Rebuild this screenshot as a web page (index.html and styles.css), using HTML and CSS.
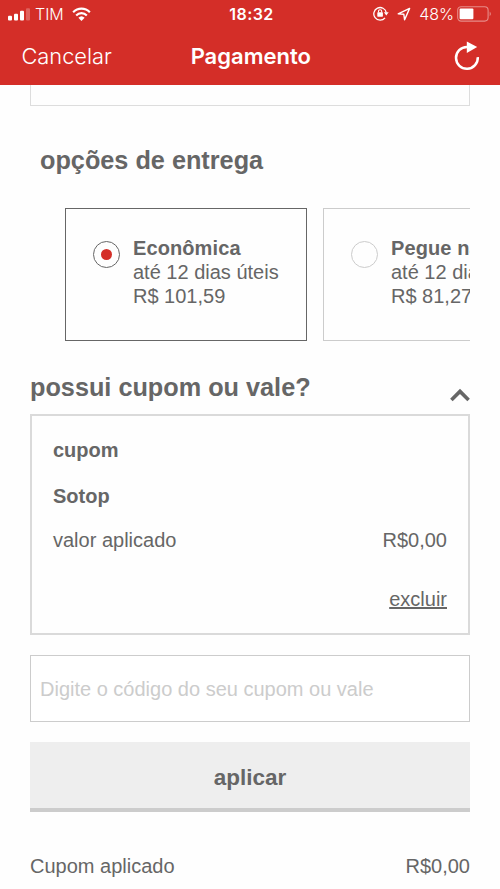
FILE: index.html
```html
<!DOCTYPE html>
<html lang="pt-BR">
<head>
<meta charset="utf-8">
<meta name="viewport" content="width=device-width, initial-scale=1">
<title>Pagamento</title>
<link rel="stylesheet" href="styles.css">
</head>
<body>
<header class="header">
  <div class="status">
    <div class="status-left">
      <svg class="signal" width="22" height="15" viewBox="0 0 22 15" fill="#fff"><rect x="0" y="9.8" width="4" height="4.7" rx="1"/><rect x="6" y="7.8" width="4" height="6.7" rx="1"/><rect x="12" y="4.8" width="4" height="9.7" rx="1"/><rect x="18" y="2.3" width="4" height="12.2" rx="1" opacity=".25"/></svg>
      <span class="carrier">TIM</span>
      <svg class="wifi" width="19" height="14" viewBox="0 0 20 14" preserveAspectRatio="none"><g fill="none" stroke="#fff" stroke-width="2.3"><path d="M1.2 5.2a12.5 12.5 0 0 1 17.6 0"/><path d="M4.4 8.5a8 8 0 0 1 11.2 0"/></g><path d="M6.7 10.8a4.8 4.8 0 0 1 6.6 0L10 14z" fill="#fff"/></svg>
    </div>
    <span class="time">18:32</span>
    <div class="status-right">
      <svg width="16" height="15" viewBox="0 0 16 15"><path d="M12 11.8A6.3 6.3 0 1 1 13.3 6.6" fill="none" stroke="#fff" stroke-width="1.3"/><path d="M10.9 6.3h4.8l-2.4 3.2z" fill="#fff"/><rect x="4.3" y="6.3" width="5.6" height="4.4" rx=".6" fill="#fff"/><path d="M5.5 6.5V5.3a1.6 1.6 0 0 1 3.2 0v1.2" fill="none" stroke="#fff" stroke-width="1.1"/></svg>
      <svg class="location" width="14" height="14" viewBox="0 0 14 14"><path d="M1.2 6.9 12.6 1.4 7.6 12.8 6.8 7.2z" fill="none" stroke="#fff" stroke-width="1.4" stroke-linejoin="round"/></svg>
      <span class="percent">48%</span>
      <svg class="battery" width="36" height="16" viewBox="0 0 36 16"><rect x=".7" y=".7" width="30.4" height="14.4" rx="3.5" fill="none" stroke="#fff" stroke-opacity=".45" stroke-width="1.1"/><rect x="2.6" y="2.6" width="13.8" height="10.6" rx="1" fill="#fff"/><path d="M32.7 5.5q2.3 2.4 0 4.8z" fill="#fff" fill-opacity=".45"/></svg>
    </div>
  </div>
  <nav class="nav">
    <a class="cancel">Cancelar</a>
    <h1 class="title">Pagamento</h1>
    <svg class="reload" width="26" height="30" viewBox="0 0 26 30"><path d="M23.8 16.2A10.9 10.9 0 1 1 13 6" fill="none" stroke="#fff" stroke-width="2.5"/><path d="M12.8.4 23.2 5.9 12.8 12z" fill="#fff"/></svg>
  </nav>
</header>
<main class="content">
  <div class="previous"></div>
  <h2 class="heading delivery-heading">opções de entrega</h2>
  <div class="options">
    <label class="option selected">
      <span class="radio"></span>
      <span class="option-text"><b>Econômica</b><span>até 12 dias úteis</span><span>R$ 101,59</span></span>
    </label>
    <label class="option">
      <span class="radio"></span>
      <span class="option-text"><b>Pegue na</b><span>até 12 dias</span><span>R$ 81,27</span></span>
    </label>
  </div>
  <div class="coupon-heading">
    <h2 class="heading">possui cupom ou vale?</h2>
    <svg class="chevron" width="20" height="14" viewBox="0 0 20 14"><path d="M1.4 12 10 3.4l8.6 8.6" fill="none" stroke="#666" stroke-width="3.6"/></svg>
  </div>
  <section class="coupon">
    <b class="coupon-type">cupom</b>
    <b class="coupon-name">Sotop</b>
    <div class="row"><span>valor aplicado</span><span>R$0,00</span></div>
    <a class="remove">excluir</a>
  </section>
  <input class="code" type="text" placeholder="Digite o código do seu cupom ou vale">
  <button class="apply">aplicar</button>
  <div class="row total"><span>Cupom aplicado</span><span>R$0,00</span></div>
</main>
</body>
</html>
```
FILE: styles.css
```css
* { box-sizing: border-box; }
body {
  margin: 0;
  height: 889px;
  overflow: hidden;
  background: #fefefe;
  color: #666;
  font: 20px/24px "Liberation Sans", Arial, sans-serif;
}
svg { display: block; flex: none; }

.header { height: 85px; background: #d42e28; color: #fff; font-family: Inter, sans-serif; }
.status {
  display: grid;
  grid-template-columns: 1fr auto 1fr;
  align-items: center;
  height: 27px;
  padding: 0 7px 0 8px;
  font-size: 16px;
}
.status-left, .status-right { display: flex; align-items: center; }
.status-right { justify-content: flex-end; }
.carrier { margin: 0 8px 0 5px; font-weight: 300; }
.time { font-weight: 600; letter-spacing: .4px; padding-left: 2px; }
.location { margin: 0 8px 0 8px; }
.percent { font-weight: 300; margin-right: 3px; }
.nav {
  display: grid;
  grid-template-columns: 1fr auto 1fr;
  align-items: center;
  height: 58px;
  padding: 0 20px 0 21.5px;
}
.cancel { font-size: 21.8px; font-weight: 300; }
.title { margin: 0; font-size: 22px; font-weight: 600; }
.reload { justify-self: end; margin-bottom: 1px; }

.content { padding: 0 30px; }
.previous { height: 21px; border: 1px solid #ddd; border-top: 0; }
.heading { margin: 0; font-size: 25.25px; line-height: 30px; font-weight: 700; }
.delivery-heading { margin: 39px 0 0 10px; }
.options { display: flex; gap: 16px; margin-top: 33px; padding-left: 35px; overflow: hidden; }
.option {
  flex: none;
  display: flex;
  width: 242px;
  height: 133px;
  padding: 27px 0 0 27px;
  border: 1px solid #ccc;
}
.option.selected { border-color: #666; }
.radio {
  display: grid;
  place-items: center;
  width: 27px;
  height: 27px;
  margin: 5px 13px 0 0;
  border: 1px solid #ccc;
  border-radius: 50%;
}
.selected .radio { border-color: #666; }
.selected .radio::after { content: ""; width: 11px; height: 11px; border-radius: 50%; background: #d42e28; }
.option-text { display: flex; flex-direction: column; white-space: nowrap; }
.option-text b { letter-spacing: .1px; }

.coupon-heading { display: flex; justify-content: space-between; margin-top: 31px; }
.chevron { margin-top: 16px; }
.coupon {
  display: flex;
  flex-direction: column;
  height: 221px;
  margin-top: 12px;
  padding: 22px 21px 0;
  border: 2px solid #dadada;
}
.coupon-name { margin-top: 22px; }
.row { display: flex; justify-content: space-between; }
.coupon .row { margin-top: 20px; }
.remove { align-self: flex-end; margin-top: 35px; text-decoration: underline; }
.code {
  display: block;
  width: 100%;
  height: 67px;
  margin-top: 20px;
  padding: 2px 9px 0;
  border: 1px solid #ccc;
  border-radius: 0;
  background: #fff;
  color: #666;
  font: inherit;
}
.code::placeholder { color: #ccc; opacity: 1; }
.apply {
  display: block;
  width: 100%;
  height: 70px;
  margin-top: 20px;
  padding: 5px 0 0;
  border: 0;
  border-bottom: 4px solid #ccc;
  background: #eee;
  color: #666;
  font: bold 22.5px/26px "Liberation Sans", Arial, sans-serif;
}
.total { margin-top: 42px; }
```
